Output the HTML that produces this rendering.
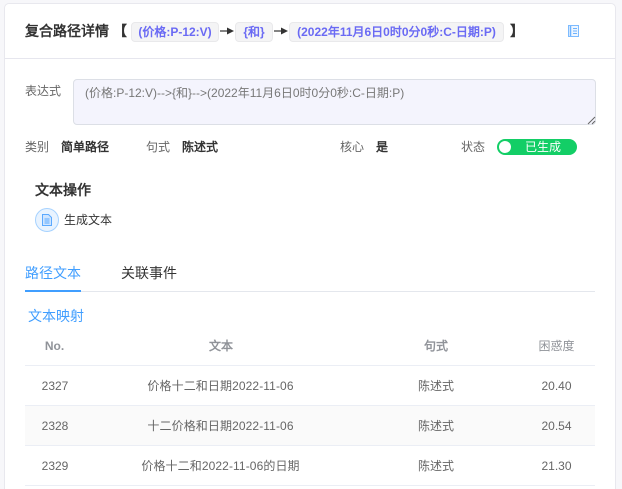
<!DOCTYPE html>
<html><head><meta charset="utf-8">
<style>
*{box-sizing:border-box}
html,body{margin:0;padding:0;width:622px;height:489px;overflow:hidden;background:#f7f7fa}
body{position:relative;font-family:"Liberation Sans","WenQuanYi Zen Hei",sans-serif;font-size:12px;color:#333}
.a{position:absolute;white-space:nowrap;line-height:16px}
.card{position:absolute;left:4px;top:3px;width:612px;height:500px;background:#fff;border:1px solid #e8e8ee;border-radius:5px}
.b{font-weight:bold}
.tag{position:absolute;top:22px;height:20px;background:#f4f4f5;border:1px solid #e9e9eb;border-radius:4px;color:#6a6af4;font-weight:bold;font-size:12px;line-height:18px;text-align:center;white-space:nowrap}
.l{color:#666}
.line{position:absolute;height:1px;background:#ebeef5;left:25px;width:570px}
.c{position:absolute;white-space:nowrap;line-height:16px;color:#666;transform:translateX(-50%)}
.th{color:#909399;font-weight:bold}
</style></head><body>
<div class="card"></div>
<div class="a b" style="left:25px;top:23px;font-size:14px;color:#333">复合路径详情</div>
<div class="a b" style="left:113px;top:23px;font-size:14px">【</div>
<div class="tag" style="left:131px;width:88px">(价格:P-12:V)</div>
<svg class="a" style="left:219px;top:25px" width="17" height="12"><path d="M1 6H12" stroke="#333" stroke-width="1.2"/><path d="M8 2.5L15 6L8 9.5Z" fill="#333"/></svg>
<div class="tag" style="left:235px;width:38px">{和}</div>
<svg class="a" style="left:273px;top:25px" width="17" height="12"><path d="M1 6H12" stroke="#333" stroke-width="1.2"/><path d="M8 2.5L15 6L8 9.5Z" fill="#333"/></svg>
<div class="tag" style="left:289px;width:215px">(2022年11月6日0时0分0秒:C-日期:P)</div>
<div class="a b" style="left:510px;top:23px;font-size:14px">】</div>
<svg class="a" style="left:568px;top:25px" width="11" height="12" viewBox="0 0 11 12"><rect x=".5" y=".5" width="10" height="11" fill="#eef6ff" stroke="#7dbbff"/><path d="M2.5 1V11" stroke="#6db3ff" stroke-width="1.5"/><path d="M5 3.5H9M5 6H9M5 8.5H9" stroke="#6db3ff"/></svg>
<div class="line" style="left:5px;width:610px;top:58px;background:#e6e6ee"></div>

<div class="a l" style="left:25px;top:83px">表达式</div>
<div style="position:absolute;left:73px;top:79px;width:523px;height:46px;background:#f4f4fd;border:1px solid #dcdfe6;border-radius:4px"></div>
<div class="a" style="left:85px;top:85px;color:#777">(价格:P-12:V)--&gt;{和}--&gt;(2022年11月6日0时0分0秒:C-日期:P)</div>
<svg class="a" style="left:587px;top:116px" width="9" height="9"><path d="M1 8L8 1M5 8L8 5" stroke="#666" stroke-width="1"/></svg>

<div class="a l" style="left:25px;top:139px">类别</div>
<div class="a b" style="left:61px;top:139px">简单路径</div>
<div class="a l" style="left:146px;top:139px">句式</div>
<div class="a b" style="left:182px;top:139px">陈述式</div>
<div class="a l" style="left:340px;top:139px">核心</div>
<div class="a b" style="left:376px;top:139px">是</div>
<div class="a l" style="left:461px;top:139px">状态</div>
<div style="position:absolute;left:497px;top:139px;width:80px;height:16px;border-radius:8px;background:#13ce66"></div>
<div style="position:absolute;left:499px;top:141px;width:12px;height:12px;border-radius:50%;background:#fff"></div>
<div class="a" style="left:525px;top:139px;color:#fff">已生成</div>

<div class="a b" style="left:35px;top:182px;font-size:14px;color:#333">文本操作</div>
<div style="position:absolute;left:35px;top:208px;width:24px;height:24px;border-radius:50%;background:#e8f3ff;border:1px solid #a6d2ff"></div>
<svg class="a" style="left:42px;top:214px" width="10" height="12" viewBox="0 0 10 12"><path d="M.5.5H6.5L9.5 3.5V11.5H.5Z" fill="#cfe5ff" stroke="#5aa9ff"/><path d="M2.5 5H7.5M2.5 7H7.5M2.5 9H7.5" stroke="#5aa9ff"/></svg>
<div class="a" style="left:64px;top:212px">生成文本</div>

<div class="a" style="left:25px;top:265px;font-size:14px;color:#409eff">路径文本</div>
<div class="a" style="left:121px;top:265px;font-size:14px;color:#333">关联事件</div>
<div class="line" style="top:291px;height:1px;background:#e4e7ed"></div>
<div style="position:absolute;left:25px;top:290px;width:56px;height:2px;background:#409eff"></div>

<div class="a" style="left:28px;top:308px;font-size:14px;color:#409eff">文本映射</div>

<div class="c th" style="left:54.5px;top:338px">No.</div>
<div class="c th" style="left:221px;top:338px">文本</div>
<div class="c th" style="left:436px;top:338px">句式</div>
<div class="c th" style="left:556.5px;top:338px;font-weight:normal">困惑度</div>
<div class="line" style="top:365px"></div>

<div class="c" style="left:55px;top:378px">2327</div>
<div class="c" style="left:220.5px;top:378px;letter-spacing:.1px">价格十二和日期2022-11-06</div>
<div class="c" style="left:436px;top:378px">陈述式</div>
<div class="c" style="left:556.5px;top:378px">20.40</div>
<div class="line" style="top:405px"></div>

<div style="position:absolute;left:25px;top:406px;width:570px;height:39px;background:#fafafa"></div>
<div class="c" style="left:55px;top:418px">2328</div>
<div class="c" style="left:220.5px;top:418px;letter-spacing:.1px">十二价格和日期2022-11-06</div>
<div class="c" style="left:436px;top:418px">陈述式</div>
<div class="c" style="left:556.5px;top:418px">20.54</div>
<div class="line" style="top:445px"></div>

<div class="c" style="left:55px;top:458px">2329</div>
<div class="c" style="left:220.5px;top:458px;letter-spacing:.1px">价格十二和2022-11-06的日期</div>
<div class="c" style="left:436px;top:458px">陈述式</div>
<div class="c" style="left:556.5px;top:458px">21.30</div>
<div class="line" style="top:485px"></div>
</body></html>
